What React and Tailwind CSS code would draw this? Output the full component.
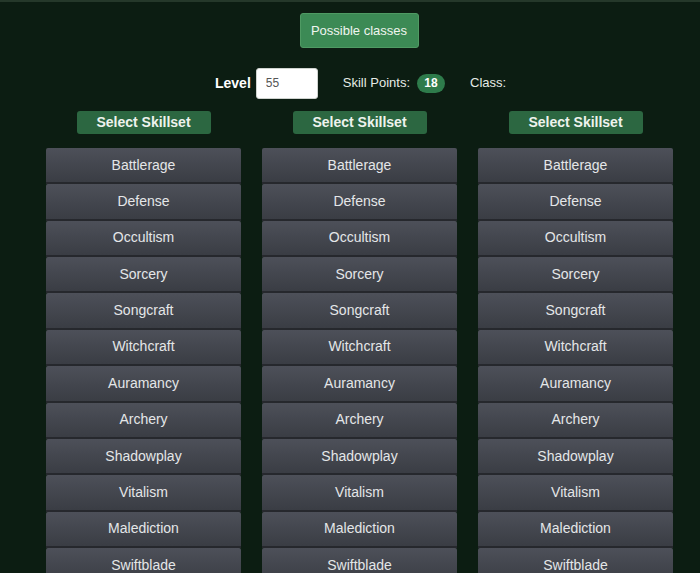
import React, { useState } from 'react';

const skills = [
  'Battlerage',
  'Defense',
  'Occultism',
  'Sorcery',
  'Songcraft',
  'Witchcraft',
  'Auramancy',
  'Archery',
  'Shadowplay',
  'Vitalism',
  'Malediction',
  'Swiftblade',
];

const SkillColumn = () => (
  <div className="flex w-[195px] flex-col items-center">
    <button className="h-[23px] w-[134px] rounded-[3px] bg-[#2c6741] text-[14px] font-bold text-[#eef3ee]">
      Select Skillset
    </button>
    <div className="mt-[14px] flex w-full flex-col">
      {skills.map((s) => (
        <button
          key={s}
          className="flex h-[36.36px] w-full shrink-0 items-center justify-center rounded-t-[2px] border-b-2 border-[#26282d] bg-gradient-to-b from-[#4d5059] to-[#3a3d44] text-[14px] text-[#e4e6e8]"
        >
          {s}
        </button>
      ))}
    </div>
  </div>
);

const App = () => {
  const [level, setLevel] = useState('55');

  return (
    <div className="h-[573px] w-[700px] overflow-hidden border-t-2 border-[#25382a] bg-[#0c1d12] font-['Liberation_Sans',Arial,sans-serif]">
      <div className="flex justify-center pt-[11px]">
        <button className="ml-[18px] h-[35px] w-[119px] rounded-[3px] border border-[#4f9a63] bg-[#3c8a55] text-[13px] text-[#f0f5f0]">
          Possible classes
        </button>
      </div>
      <div className="mt-[19px] flex h-[32px] items-center">
        <span className="ml-[215px] text-[14px] font-bold text-white">Level</span>
        <input
          value={level}
          onChange={(e) => setLevel(e.target.value)}
          className="ml-[5px] h-[31px] w-[62px] rounded-[3px] border border-[#cfd3cf] bg-white px-[9px] text-[12px] text-[#555]"
        />
        <span className="ml-[25px] text-[13px] text-[#e6ebe6]">Skill Points:</span>
        <span className="ml-[7px] flex h-[19px] w-[28px] items-center justify-center rounded-full bg-[#2e7b4b] text-[12px] font-bold text-white">
          18
        </span>
        <span className="ml-[25px] text-[13px] text-[#e6ebe6]">Class:</span>
      </div>
      <div className="mt-[12px] flex gap-[21px] pl-[46px]">
        <SkillColumn />
        <SkillColumn />
        <SkillColumn />
      </div>
    </div>
  );
};

export default App;
